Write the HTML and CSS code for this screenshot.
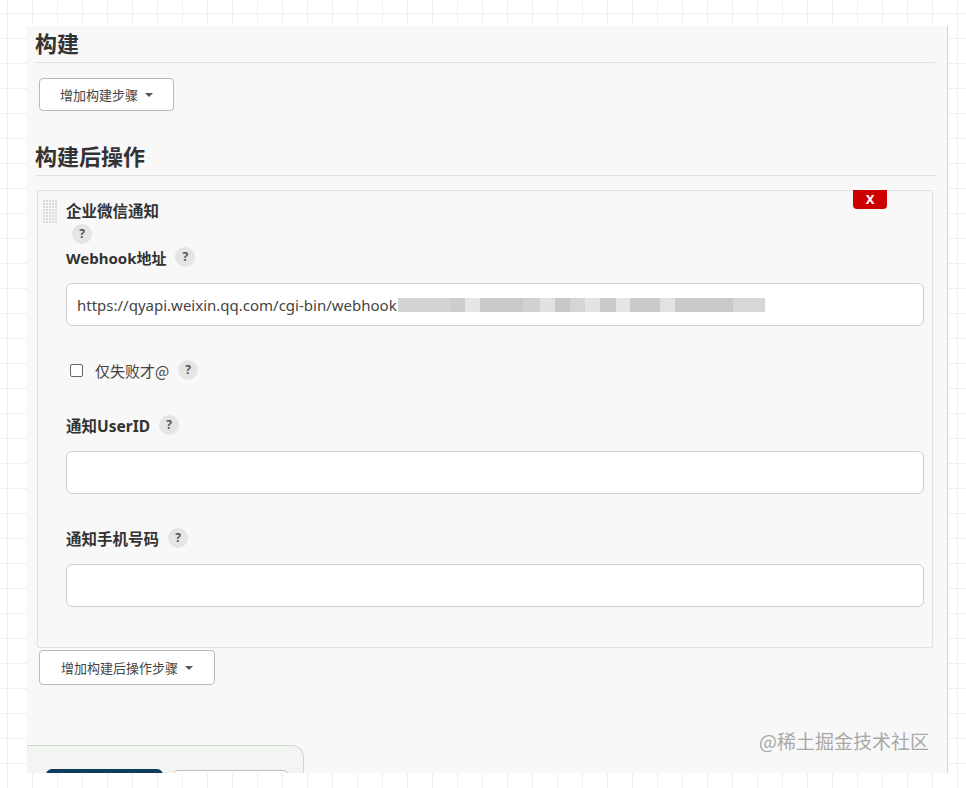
FILE: index.html
```html
<!DOCTYPE html>
<html lang="zh-CN">
<head>
<meta charset="utf-8">
<title>构建配置</title>
<link rel="stylesheet" href="styles.css">
</head>
<body>
<div class="panel">
  <div class="content">
    <h2 class="section-title">构建</h2>
    <button class="drop-btn btn-build" type="button">增加构建步骤<span class="caret"></span></button>

    <h2 class="section-title section-post">构建后操作</h2>

    <div class="repeated-chunk">
      <div class="drag-handle"></div>
      <button class="delete-btn" type="button">X</button>
      <div class="chunk-title">企业微信通知</div>
      <div class="help-row"><span class="help">?</span></div>

      <div class="field-label first-label">Webhook地址<span class="help">?</span></div>
      <div class="text-input">
        <span class="url">https://qyapi.weixin.qq.com/cgi-bin/webhook</span><span class="blurred"></span>
      </div>

      <label class="check-row"><span class="checkbox"></span><span class="check-text">仅失败才@</span><span class="help">?</span></label>

      <div class="field-label label-user">通知UserID<span class="help">?</span></div>
      <div class="text-input"></div>

      <div class="field-label label-phone">通知手机号码<span class="help">?</span></div>
      <div class="text-input"></div>
    </div>

    <button class="drop-btn btn-post" type="button">增加构建后操作步骤<span class="caret"></span></button>
  </div>

  <div class="bottom-bar">
    <button class="save-btn" type="button" aria-label="保存"></button>
    <button class="apply-btn" type="button" aria-label="应用"></button>
  </div>

  <div class="watermark">@稀土掘金技术社区</div>
</div>
</body>
</html>
```

FILE: styles.css
```css
html, body {
  margin: 0;
  padding: 0;
}

body {
  width: 966px;
  height: 788px;
  overflow: hidden;
  background-color: #ffffff;
  background-image:
    linear-gradient(to right, #f0f0f0 1px, transparent 1px),
    linear-gradient(to bottom, #f0f0f0 1px, transparent 1px);
  background-size: 25px 25px;
  background-position: 7px 13px;
  font-family: "Noto Sans", "Noto Sans CJK SC", sans-serif;
  color: #333;
  padding-top: 26px;
  padding-left: 27px;
  box-sizing: border-box;
}

.panel {
  position: relative;
  width: 920px;
  height: 747px;
  background: #f8f8f8;
  border-right: 1px solid #d4d4d4;
  overflow: hidden;
  display: flex;
  flex-direction: column;
}

.content {
  padding: 3px 12px 0 8px;
  display: flex;
  flex-direction: column;
  align-items: flex-start;
}

.section-title {
  align-self: stretch;
  margin: 0;
  font-family: "Noto Sans CJK SC", sans-serif;
  font-size: 22px;
  font-weight: 700;
  line-height: 26px;
  padding-bottom: 7px;
  border-bottom: 1px solid #e0e0e0;
  color: #333;
}

.section-post {
  margin-top: 31px;
}

.drop-btn {
  display: inline-flex;
  align-items: center;
  justify-content: center;
  gap: 7px;
  height: 33px;
  margin-left: 4px;
  padding: 0;
  background: #ffffff;
  border: 1px solid #b9b9b9;
  border-radius: 4px;
  font-family: "Noto Sans CJK SC", sans-serif;
  font-size: 13px;
  color: #444;
  box-sizing: border-box;
}

.btn-build {
  width: 135px;
  margin-top: 15px;
}

.btn-post {
  width: 176px;
  height: 35px;
  margin-top: 2px;
}

.caret {
  width: 0;
  height: 0;
  border-left: 4px solid transparent;
  border-right: 4px solid transparent;
  border-top: 4px solid #555;
  margin-top: 1px;
}

.repeated-chunk {
  position: relative;
  align-self: stretch;
  margin: 14px 2px 0 2px;
  padding: 9px 8px 40px 28px;
  border: 1px solid #e0e0e0;
  border-radius: 2px;
  background: #f8f8f8;
  display: flex;
  flex-direction: column;
  align-items: flex-start;
}

.drag-handle {
  position: absolute;
  left: 5px;
  top: 9px;
  width: 14px;
  height: 23px;
  background-image:
    linear-gradient(to bottom, transparent 2px, #f8f8f8 2px),
    linear-gradient(to right, #d9d9d9 2px, transparent 2px);
  background-size: 3px 3px, 3px 3px;
}

.delete-btn {
  position: absolute;
  top: -1px;
  right: 45px;
  width: 34px;
  height: 19px;
  padding: 0;
  border: none;
  border-radius: 0 0 4px 4px;
  background: #cc0000;
  color: #fff;
  font-family: "Noto Sans", sans-serif;
  font-size: 13px;
  font-weight: 700;
  line-height: 19px;
}

.chunk-title {
  font-family: "Noto Sans CJK SC", sans-serif;
  font-size: 15.5px;
  font-weight: 700;
  line-height: 20px;
  color: #333;
}

.help-row {
  margin-top: 4px;
  margin-left: 6px;
  display: flex;
}

.help {
  display: inline-flex;
  align-items: center;
  justify-content: center;
  width: 20px;
  height: 20px;
  border-radius: 50%;
  background: #e5e5e5;
  color: #555;
  font-family: "Noto Sans", sans-serif;
  font-size: 12px;
  font-weight: 700;
  line-height: 1;
}

.field-label {
  display: flex;
  align-items: center;
  gap: 9px;
  height: 20px;
  font-family: "Noto Sans", "Noto Sans CJK SC", sans-serif;
  font-size: 15px;
  font-weight: 700;
  color: #333;
}

.label-user,
.label-phone {
  font-size: 15.5px;
}

.first-label {
  margin-top: 3px;
}

.label-user {
  margin-top: 35px;
}

.label-phone {
  margin-top: 34px;
}

.text-input {
  align-self: stretch;
  margin-top: 16px;
  height: 43px;
  box-sizing: border-box;
  border: 1px solid #cfcfcf;
  border-radius: 6px;
  background: #ffffff;
  display: flex;
  align-items: center;
  padding-left: 10px;
  font-family: "Noto Sans", sans-serif;
  font-size: 15px;
  color: #444;
}

.url {
  white-space: nowrap;
}

.blurred {
  display: inline-block;
  width: 367px;
  height: 14px;
  margin-left: 1px;
  background: linear-gradient(to right,
    #d3d3d3 0, #d3d3d3 53px,
    #cdcdcd 53px, #cdcdcd 67px,
    #e6e6e6 67px, #e6e6e6 82px,
    #c9c9c9 82px, #c9c9c9 125px,
    #d1d1d1 125px, #d1d1d1 142px,
    #e1e1e1 142px, #e1e1e1 157px,
    #c8c8c8 157px, #c8c8c8 172px,
    #d5d5d5 172px, #d5d5d5 187px,
    #e3e3e3 187px, #e3e3e3 202px,
    #cbcbcb 202px, #cbcbcb 218px,
    #e5e5e5 218px, #e5e5e5 232px,
    #cacaca 232px, #cacaca 262px,
    #e2e2e2 262px, #e2e2e2 277px,
    #c9c9c9 277px, #c9c9c9 335px,
    #d7d7d7 335px, #d7d7d7 367px);
}

.check-row {
  display: flex;
  align-items: center;
  height: 20px;
  margin-top: 34px;
  margin-left: 4px;
  font-family: "Noto Sans CJK SC", sans-serif;
  font-size: 15px;
  color: #444;
}

.checkbox {
  width: 11px;
  height: 11px;
  border: 1px solid #666;
  border-radius: 2px;
  background: #fff;
}

.check-text {
  margin-left: 12px;
  margin-right: 9px;
}

.bottom-bar {
  margin-top: auto;
  height: 28px;
  width: 277px;
  flex-shrink: 0;
  box-sizing: border-box;
  border: 1px solid #cdd8cb;
  border-left: none;
  border-bottom: none;
  border-radius: 0 12px 0 0;
  background: #f3f5f2;
  display: flex;
  align-items: flex-start;
  gap: 9px;
  padding: 23px 0 0 19px;
  overflow: hidden;
}

.save-btn {
  flex-shrink: 0;
  width: 117px;
  height: 36px;
  border: none;
  border-radius: 6px;
  background: #0d3c5f;
}

.apply-btn {
  flex-shrink: 0;
  width: 117px;
  height: 36px;
  margin-top: 1px;
  border: 1px solid #bdbdbd;
  border-radius: 6px;
  background: #fff;
}

.watermark {
  position: absolute;
  right: 18px;
  top: 701px;
  font-family: "Noto Sans CJK SC", sans-serif;
  font-size: 19px;
  color: #a8a8a8;
  white-space: nowrap;
}
```
